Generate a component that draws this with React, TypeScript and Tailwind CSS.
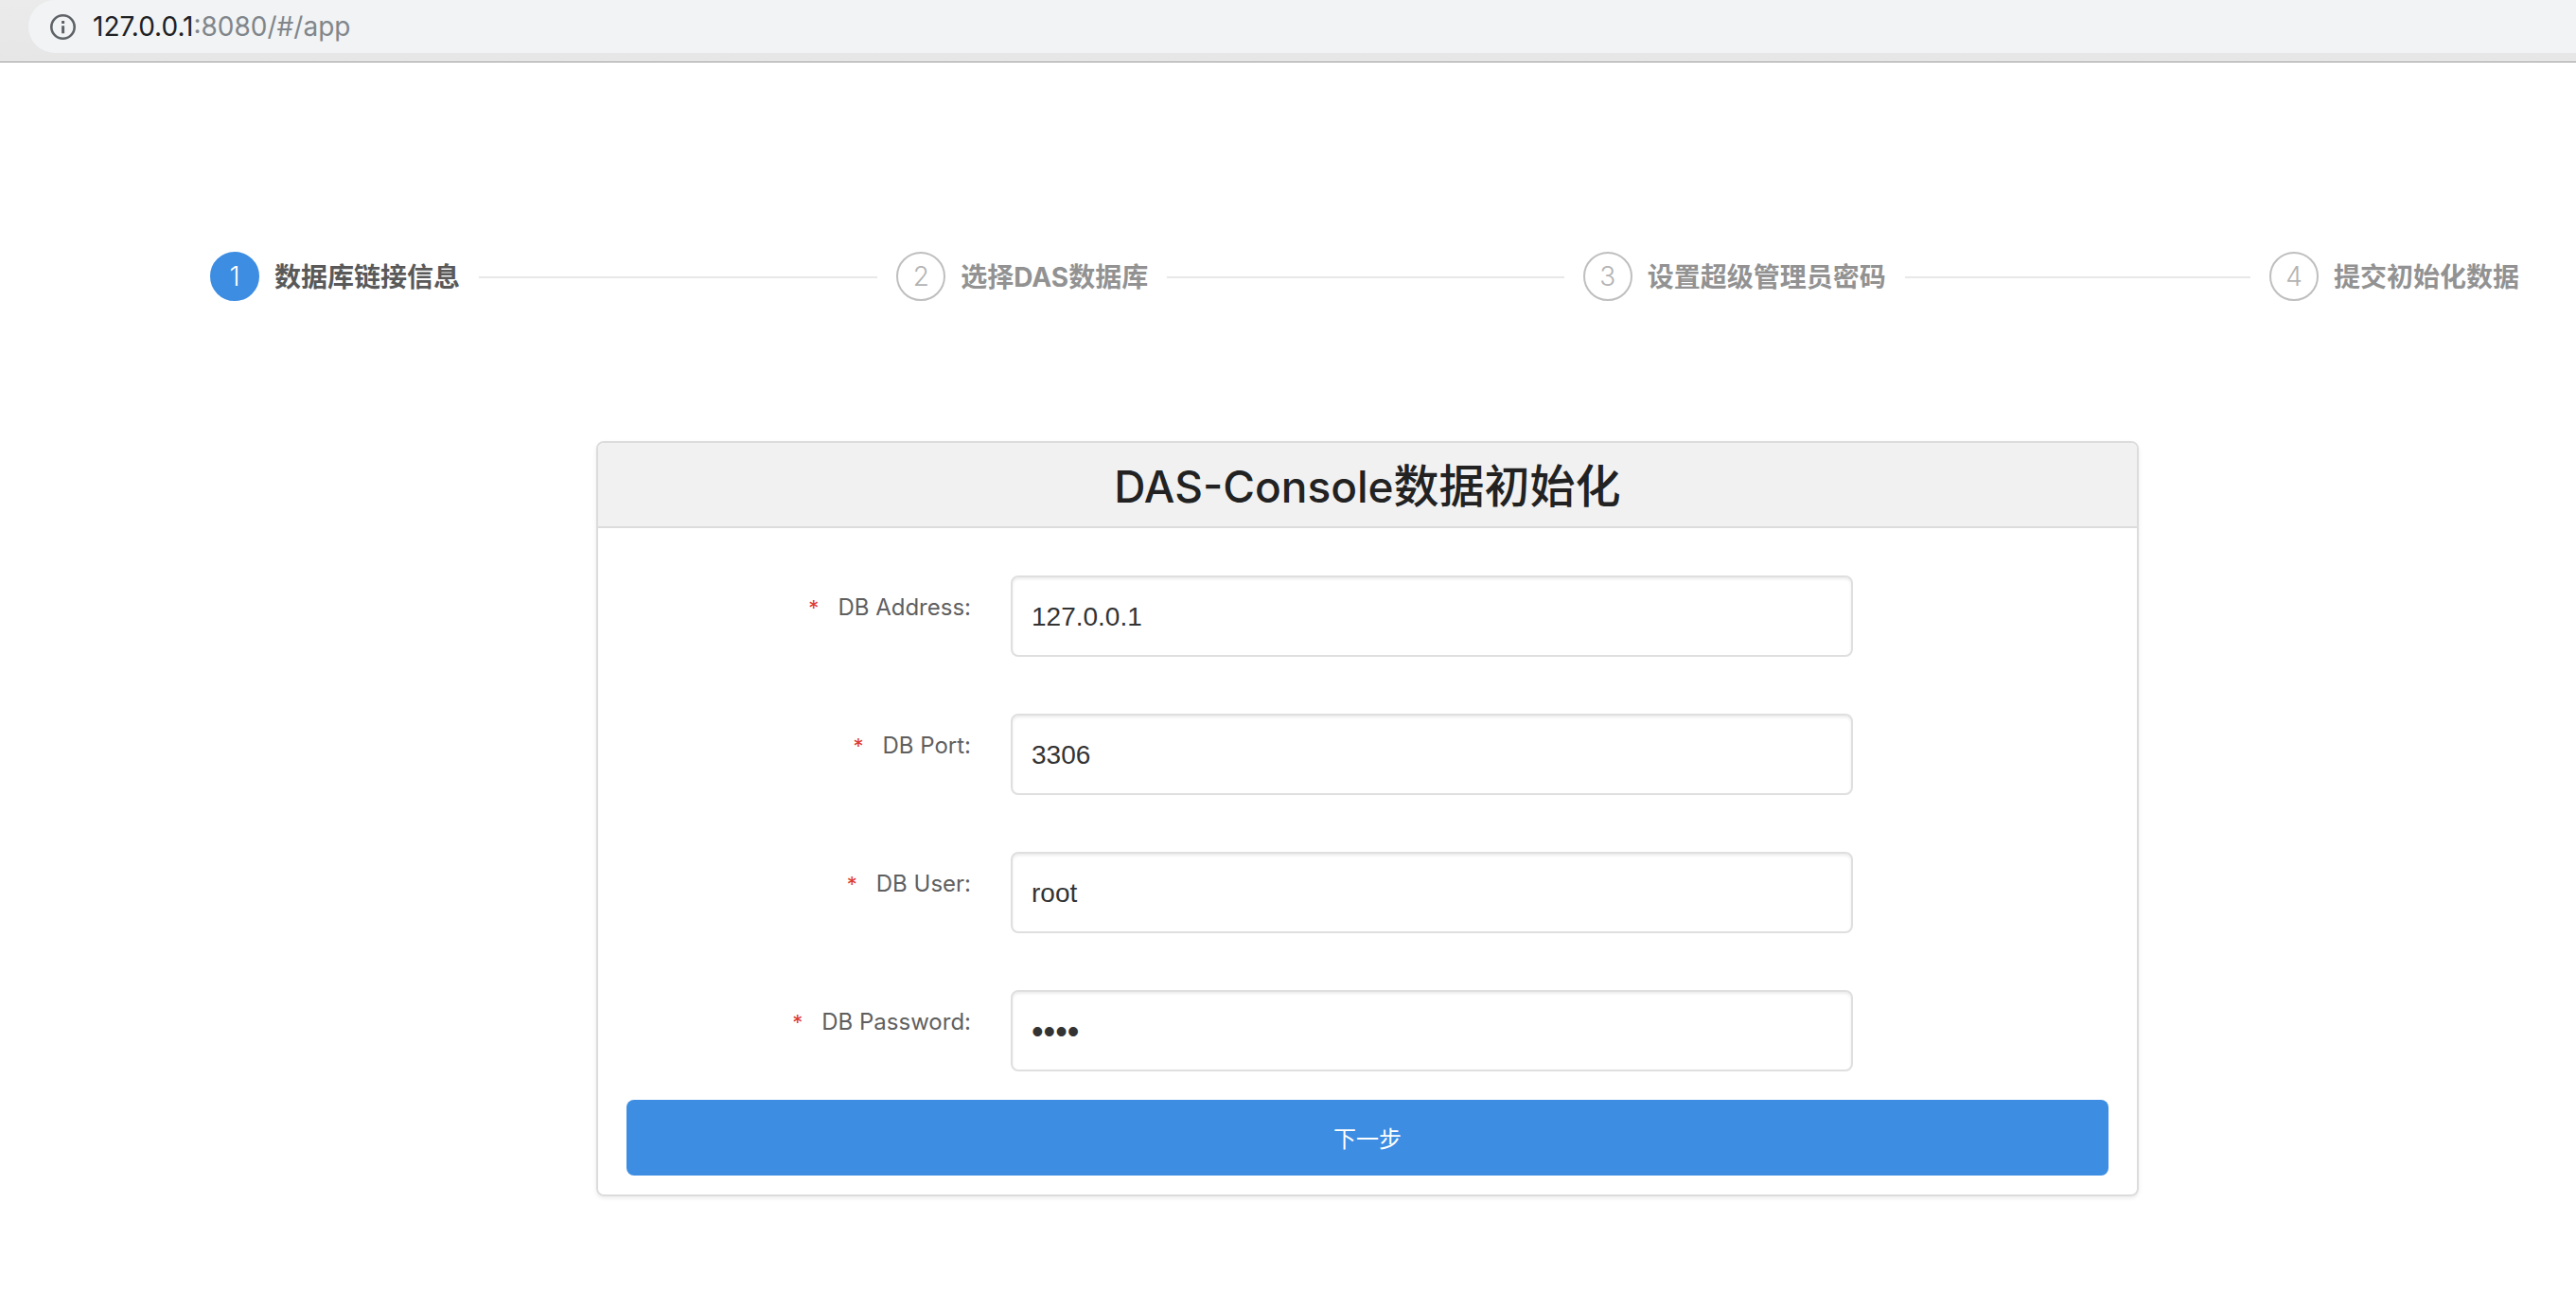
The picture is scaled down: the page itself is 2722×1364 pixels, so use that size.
import { useState } from "react";
import type { FormEvent } from "react";

const steps = ["数据库链接信息", "选择DAS数据库", "设置超级管理员密码", "提交初始化数据"];

const fields = [
  { id: "db-address", label: "DB Address:", type: "text", value: "127.0.0.1" },
  { id: "db-port", label: "DB Port:", type: "text", value: "3306" },
  { id: "db-user", label: "DB User:", type: "text", value: "root" },
  { id: "db-password", label: "DB Password:", type: "password", value: "root" },
];

function AddressBar() {
  return (
    <header className="overflow-hidden border-b border-[#9d9d9d] bg-linear-to-b from-[#ebebeb] to-[#e6e6e6] pb-[9px] pl-[30px]">
      <div className="flex h-14 items-center gap-[18px] rounded-l-full bg-[#f1f3f4] pl-[23px]">
        <svg className="size-[27px] shrink-0" viewBox="0 0 27 27" fill="none" aria-hidden="true">
          <circle cx="13.5" cy="13.5" r="12.2" stroke="#5f6368" strokeWidth="2.6" />
          <path d="M12.1 7h3v3h-3zM12.1 12.2h3v8h-3z" fill="#5f6368" />
        </svg>
        <span className="text-[28px] leading-none whitespace-nowrap text-[#80868b]">
          <span className="text-[#202124]">127.0.0.1</span>:8080/#/app
        </span>
      </div>
    </header>
  );
}

function Steps({ current }: { current: number }) {
  return (
    <ol className="flex pr-[60px] pl-[54px]">
      {steps.map((title, i) => {
        const active = i === current;
        const last = i === steps.length - 1;
        return (
          <li key={title} className={last ? "flex items-center" : "flex flex-1 items-center pr-5"}>
            <span
              className={
                active
                  ? "flex size-[52px] shrink-0 items-center justify-center rounded-full border-2 border-[#3d8de2] bg-[#3d8de2] text-[28px] font-light text-white"
                  : "flex size-[52px] shrink-0 items-center justify-center rounded-full border-2 border-[#bfbfbf] text-[28px] font-light text-[#b3b3b3]"
              }
            >
              {i + 1}
            </span>
            <span
              className={
                active
                  ? "mt-0.5 ml-4 text-[28px] leading-10 font-bold whitespace-nowrap text-[#595959]"
                  : "mt-0.5 ml-4 text-[28px] leading-10 font-bold whitespace-nowrap text-[#929292]"
              }
            >
              {title}
            </span>
            {!last && <span className="mt-0.5 ml-5 h-0.5 flex-1 bg-[#e8e8e8]" />}
          </li>
        );
      })}
    </ol>
  );
}

export default function App() {
  const [values, setValues] = useState<Record<string, string>>(
    Object.fromEntries(fields.map((f) => [f.id, f.value])),
  );
  const submit = (e: FormEvent) => e.preventDefault();

  return (
    <div className="min-h-screen bg-white font-['Inter','Noto_Sans_CJK_SC',sans-serif]">
      <AddressBar />
      <main className="pt-[200px] pb-[100px] pl-[168px]">
        <Steps current={0} />
        <section className="mx-auto mt-[148px] w-full max-w-[1630px] rounded-lg border-2 border-[#dcdcdc] shadow-[0_2px_4px_rgba(0,0,0,0.08)]">
          <h1 className="rounded-t-md border-b-2 border-[#dcdcdc] bg-[#f1f1f1] pt-[10px] pb-1.5 text-center text-[48px] leading-[72px] font-medium text-[#222]">
            <span className="text-[46px]">DAS-Console</span>数据初始化
          </h1>
          <form onSubmit={submit} className="px-[30px] pt-[50px] pb-5">
            <div className="flex flex-col gap-[60px]">
              {fields.map((f) => (
                <div key={f.id} className="grid grid-cols-[406fr_890fr_270fr] items-start">
                  <label
                    htmlFor={f.id}
                    className="flex justify-end gap-5 pt-4 pr-[42px] text-[24px] leading-9 whitespace-nowrap text-[#5f5f5f]"
                  >
                    <span className="text-[22px] text-[#dc3a30]">*</span>
                    {f.label}
                  </label>
                  <input
                    id={f.id}
                    type={f.type}
                    required
                    value={values[f.id]}
                    onChange={(e) => setValues({ ...values, [f.id]: e.target.value })}
                    className={
                      f.type === "password"
                        ? "h-[86px] w-full rounded-lg border-2 border-[#dfdfdf] bg-white px-5 pt-0.5 font-['Liberation_Sans',sans-serif] text-[36px] text-[#333] shadow-[inset_0_2px_3px_rgba(0,0,0,0.08)] outline-none"
                        : "h-[86px] w-full rounded-lg border-2 border-[#dfdfdf] bg-white px-5 pt-0.5 font-['Liberation_Sans',sans-serif] text-[28px] text-[#333] shadow-[inset_0_2px_3px_rgba(0,0,0,0.08)] outline-none"
                    }
                  />
                </div>
              ))}
            </div>
            <button
              type="submit"
              className="mt-[30px] h-20 w-full rounded-lg bg-[#3d8de2] pt-[3px] text-[24px] text-white"
            >
              下一步
            </button>
          </form>
        </section>
      </main>
    </div>
  );
}
